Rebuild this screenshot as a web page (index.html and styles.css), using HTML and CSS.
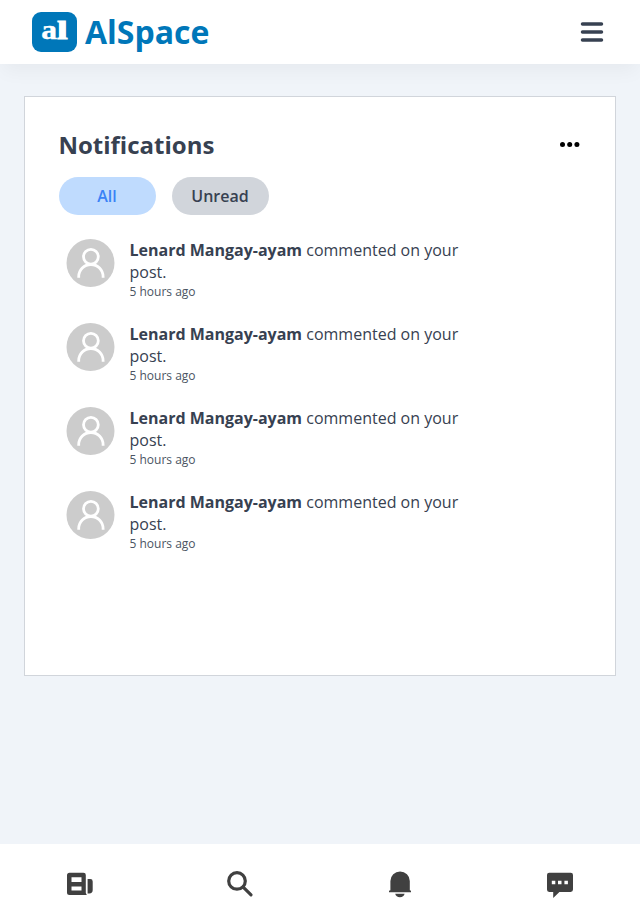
FILE: index.html
```html
<!DOCTYPE html>
<html lang="en">
<head>
<meta charset="utf-8">
<title>AlSpace</title>
<link rel="stylesheet" href="styles.css">
</head>
<body>
<header class="topbar">
  <div class="brand">
    <svg class="logo" width="45" height="40" viewBox="0 0 45 40"><rect width="45" height="40" rx="9"/><text x="9.3" y="27" textLength="15.8" lengthAdjust="spacingAndGlyphs">a</text><text class="stem" x="25.2" y="27" textLength="10.2" lengthAdjust="spacingAndGlyphs">l</text></svg>
    <span class="brand-name">AlSpace</span>
  </div>
  <svg class="menu" width="24" height="24" viewBox="0 0 24 24"><path d="M2.5 4h19M2.5 12h19M2.5 20h19"/></svg>
</header>
<main class="content">
  <section class="card">
    <div class="card-head">
      <h1>Notifications</h1>
      <svg class="dots" width="20" height="6" viewBox="0 0 20 6"><circle cx="2.5" cy="2.5" r="2.5"/><circle cx="9.7" cy="2.5" r="2.5"/><circle cx="16.9" cy="2.5" r="2.5"/></svg>
    </div>
    <div class="filters"><button class="pill active">All</button><button class="pill">Unread</button></div>
    <ul class="list">
      <li class="item">
        <svg class="avatar" viewBox="0 0 48 48"><circle class="disc" cx="23.5" cy="24" r="24"/><g class="person"><circle cx="23.9" cy="17.8" r="7.4"/><path d="M11.7 38.8v-1a12.2 12.3 0 0 1 24.4 0v1"/></g></svg>
        <div class="body"><p><strong>Lenard Mangay-ayam</strong> commented on your post.</p><time>5 hours ago</time></div>
      </li>
      <li class="item">
        <svg class="avatar" viewBox="0 0 48 48"><circle class="disc" cx="23.5" cy="24" r="24"/><g class="person"><circle cx="23.9" cy="17.8" r="7.4"/><path d="M11.7 38.8v-1a12.2 12.3 0 0 1 24.4 0v1"/></g></svg>
        <div class="body"><p><strong>Lenard Mangay-ayam</strong> commented on your post.</p><time>5 hours ago</time></div>
      </li>
      <li class="item">
        <svg class="avatar" viewBox="0 0 48 48"><circle class="disc" cx="23.5" cy="24" r="24"/><g class="person"><circle cx="23.9" cy="17.8" r="7.4"/><path d="M11.7 38.8v-1a12.2 12.3 0 0 1 24.4 0v1"/></g></svg>
        <div class="body"><p><strong>Lenard Mangay-ayam</strong> commented on your post.</p><time>5 hours ago</time></div>
      </li>
      <li class="item">
        <svg class="avatar" viewBox="0 0 48 48"><circle class="disc" cx="23.5" cy="24" r="24"/><g class="person"><circle cx="23.9" cy="17.8" r="7.4"/><path d="M11.7 38.8v-1a12.2 12.3 0 0 1 24.4 0v1"/></g></svg>
        <div class="body"><p><strong>Lenard Mangay-ayam</strong> commented on your post.</p><time>5 hours ago</time></div>
      </li>
    </ul>
  </section>
</main>
<nav class="tabs">
  <a><svg viewBox="0 0 32 32"><path fill-rule="evenodd" d="M5.5 4.7h14a2.3 2.3 0 0 1 2.3 2.3v18l1 2H5.5A2.5 2.5 0 0 1 3 24.5V7.2a2.5 2.5 0 0 1 2.5-2.5zM7.5 9.3v4.6h10V9.3zM7.5 18.4v4h10v-4z"/><path d="M23.6 11h2.7a2.4 2.4 0 0 1 2.4 2.4V22a3.4 3.4 0 0 1-3.4 3.4h-1.7z"/></svg></a>
  <a><svg viewBox="0 0 32 32"><g class="lens"><circle cx="13" cy="12.9" r="8.3"/><path d="M19.2 19.2l7.8 7.6"/></g></svg></a>
  <a><svg viewBox="0 0 32 32"><path d="M6.4 22.2V13a9.7 9.5 0 0 1 19.4 0v9.2l1.2.5v1.6H5v-1.6zM11.2 25.8h9.4a4.8 4.3 0 0 1-9.4 0z"/></svg></a>
  <a><svg viewBox="0 0 32 32"><path fill-rule="evenodd" d="M5.2 4.7h21.4A2.3 2.3 0 0 1 29 7v14.5a2.4 2.4 0 0 1-2.4 2.4H15.4L9.2 30v-6.1h-4A2.3 2.3 0 0 1 3 21.5V7a2.3 2.3 0 0 1 2.2-2.3zM7.8 12.7v3.5h3.5v-3.5zM14 12.7v3.5h3.5v-3.5zM20.4 12.7v3.5h3.5v-3.5z"/></svg></a>
</nav>
</body>
</html>
```
FILE: styles.css
```css
* { box-sizing: border-box; }
body {
  margin: 0;
  height: 924px;
  display: flex;
  flex-direction: column;
  background: #f0f4f9;
  color: #374151;
  font-family: "Open Sans", sans-serif;
}
svg { display: block; flex: none; }
.topbar {
  height: 64px;
  padding: 0 36px 0 32px;
  display: flex;
  align-items: center;
  justify-content: space-between;
  background: #fff;
  box-shadow: 0 10px 18px -3px rgba(0, 0, 0, .045);
}
.brand { display: flex; align-items: center; gap: 8px; }
.logo rect { fill: #0077b9; }
.logo text { fill: #fff; stroke: #fff; stroke-width: .4; font: bold 27px "Liberation Serif", serif; }
.logo .stem { stroke-width: 1.2; font-size: 26px; }
.brand-name { color: #0077b9; font-size: 32px; font-weight: 700; line-height: 40px; }
.menu { fill: none; stroke: #374151; stroke-width: 3.5; stroke-linecap: round; }
.content { flex: 1; padding: 32px 24px 0; }
.card {
  height: 580px;
  padding: 32px 34px 0 33.5px;
  background: #fff;
  border: 1px solid #d1d5db;
}
.card-head { height: 32px; display: flex; align-items: center; justify-content: space-between; }
h1 { margin: 0; font-size: 24px; font-weight: 700; line-height: 32px; }
.dots { margin-right: 1px; }
.filters { display: flex; gap: 16px; margin-top: 16px; }
.pill {
  width: 97px;
  height: 38px;
  padding: 0;
  border: 0;
  border-radius: 19px;
  background: #d1d5db;
  color: #374151;
  font: 600 16px/24px "Open Sans", sans-serif;
}
.pill.active { background: #bfdbfe; color: #3b82f6; }
.list { list-style: none; margin: 16px 0 0; padding: 0; }
.item { display: flex; height: 84px; padding: 8px 8px 0; gap: 15px; }
.avatar { width: 48px; height: 48px; overflow: visible; }
.disc { fill: #ccc; }
.person { fill: none; stroke: #fff; stroke-width: 2.8; }
.body { width: 340px; }
.body p { margin: 0; font-size: 16px; line-height: 22px; }
.body time { display: block; color: #4b5563; font-size: 12px; line-height: 18px; }
.tabs { height: 80px; display: flex; background: #fff; }
.tabs a { flex: 1; display: flex; align-items: center; justify-content: center; }
.tabs svg { width: 32px; height: 32px; fill: #404040; }
.lens { fill: none; stroke: #404040; stroke-width: 3.2; stroke-linecap: round; }
```
